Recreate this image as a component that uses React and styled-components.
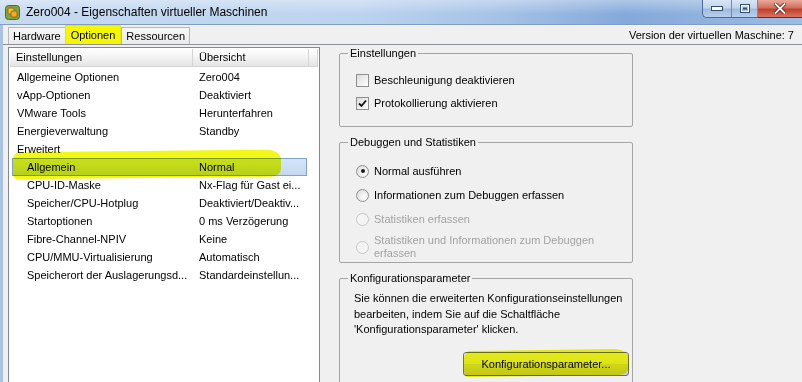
import React from 'react';
import styled, { createGlobalStyle } from 'styled-components';

const GlobalStyle = createGlobalStyle`
  body {
    margin: 0;
    background: #f0f0f0;
    font-family: "Liberation Sans", Tahoma, Arial, sans-serif;
    font-size: 11px;
    color: #000;
  }
`;

const Window = styled.div`
  width: 802px;
  height: 382px;
  overflow: hidden;
  display: flex;
  flex-direction: column;
  background: #f0f0f0;
`;

const TitleBar = styled.div`
  height: 24px;
  flex-shrink: 0;
  display: flex;
  align-items: flex-start;
  border-bottom: 1px solid #7f9dc4;
  background:
    linear-gradient(to bottom, rgba(255, 255, 255, 0.35), rgba(255, 255, 255, 0) 60%),
    linear-gradient(to right, #c6daf1 0%, #bcd3ef 45%, #a6c2e6 62%, #84a9da 78%, #9dbce3 100%);
`;

const AppIcon = styled.svg`
  margin: 5px 0 0 5px;
  flex-shrink: 0;
`;

const TitleText = styled.span`
  margin: 5px 0 0 6px;
  font-size: 12px;
  line-height: 15px;
  color: #000;
`;

const CaptionButtons = styled.div`
  margin-left: auto;
  display: flex;
`;

const CaptionGroup = styled.div`
  display: flex;
  border: 1px solid #4c6a93;
  border-top: none;
  border-right: none;
  border-radius: 0 0 0 5px;
  overflow: hidden;
  background: linear-gradient(to bottom, #d9e6f5 0%, #c0d4ec 45%, #9fbbe0 55%, #b7cfec 100%);
`;

const CaptionButton = styled.div`
  width: ${(p) => p.w}px;
  height: 17px;
  display: flex;
  align-items: center;
  justify-content: center;
  border-right: 1px solid #6d8bb3;
`;

const CloseButton = styled.div`
  width: 44px;
  height: 17px;
  display: flex;
  align-items: center;
  justify-content: center;
  border-bottom: 1px solid #6a2a22;
  background: linear-gradient(to bottom, #e9a99a 0%, #d46f5c 45%, #c0412c 55%, #d9735e 100%);
`;

const Body = styled.div`
  flex: 1;
  display: flex;
  flex-direction: column;
  border-left: 3px solid #a9c3e5;
  min-height: 0;
`;

const TabRow = styled.div`
  height: 19px;
  flex-shrink: 0;
  display: flex;
  align-items: flex-end;
  padding-left: 5px;
  border-bottom: 1px solid #8e9297;
`;

const Tab = styled.div`
  height: ${(p) => (p.active ? 18 : 16)}px;
  line-height: ${(p) => (p.active ? 18 : 16)}px;
  padding: 0 ${(p) => (p.active ? 5 : 4)}px;
  font-size: 11px;
  background: ${(p) => (p.active ? '#f4f700' : 'linear-gradient(to bottom, #f6f6f6, #ebebeb)')};
  border: 1px solid ${(p) => (p.active ? '#e8ea00' : '#b8b8b8')};
  border-bottom: none;
  margin-right: ${(p) => (p.active ? 0 : -1)}px;
`;

const VersionLabel = styled.div`
  margin-left: auto;
  align-self: center;
  padding-right: 8px;
  font-size: 11px;
`;

const Panel = styled.div`
  flex: 1;
  display: flex;
  gap: 19px;
  padding: 2px 0 0 5px;
  min-height: 0;
`;

const ListBox = styled.div`
  position: relative;
  width: 308px;
  padding: 1px;
  background: #fff;
  border: 1px solid #828790;
  border-bottom: none;
`;

const ListHeader = styled.div`
  display: grid;
  grid-template-columns: 183px 116px 1fr;
  height: 17px;
  background: linear-gradient(to bottom, #ffffff 0%, #f3f3f3 50%, #e4e4e4 100%);
  border-bottom: 1px solid #d5d5d5;
`;

const HeaderCell = styled.div`
  padding-left: 6px;
  line-height: 17px;
  border-right: 1px solid #d5d5d5;
`;

const Rows = styled.div`
  padding-top: 1px;
`;

const Row = styled.div`
  display: grid;
  grid-template-columns: 181px 114px;
  width: 295px;
  height: 18px;
  margin-left: 2px;
  box-sizing: border-box;
  align-items: center;
  background: ${(p) => (p.selected ? 'linear-gradient(to bottom, #d6e6f8, #c3d8f0)' : 'transparent')};
  border: 1px solid ${(p) => (p.selected ? '#7da2ce' : 'transparent')};
`;

const Cell = styled.div`
  padding-left: ${(p) => p.indent}px;
  white-space: nowrap;
  overflow: hidden;
`;

const Marker = styled.div`
  position: absolute;
  left: ${(p) => p.x}px;
  top: ${(p) => p.y}px;
  width: ${(p) => p.w}px;
  height: ${(p) => p.h}px;
  background: rgba(238, 246, 0, 0.9);
  mix-blend-mode: multiply;
  border-radius: 6px 14px 10px 4px / 8px 10px 8px 6px;
  transform: rotate(${(p) => p.r}deg);
  pointer-events: none;
`;

const RightColumn = styled.div`
  width: 294px;
  display: flex;
  flex-direction: column;
  gap: 9px;
`;

const Group = styled.fieldset`
  margin: 0;
  padding: 0 0 0 8px;
  border: 1px solid #a5a5a5;
  border-radius: 2px;
  min-width: 0;
`;

const Legend = styled.legend`
  padding: 0 2px;
  line-height: 13px;
  font-size: 11px;
`;

const OptionList = styled.div`
  display: flex;
  flex-direction: column;
  gap: ${(p) => p.gap}px;
  padding: ${(p) => p.pad};
`;

const Option = styled.label`
  display: flex;
  align-items: center;
  gap: 5px;
  min-height: ${(p) => p.h}px;
  color: ${(p) => (p.disabled ? '#a3a3a3' : '#000')};
  line-height: 13px;
`;

const CheckBox = styled.span`
  width: 11px;
  height: 11px;
  flex-shrink: 0;
  border: 1px solid #8f8f8f;
  background: linear-gradient(to bottom right, #dcdcdc, #ffffff);
  display: flex;
  align-items: center;
  justify-content: center;
`;

const Radio = styled.span`
  width: 11px;
  height: 11px;
  flex-shrink: 0;
  border-radius: 50%;
  border: 1px solid ${(p) => (p.disabled ? '#c8c8c8' : '#8f8f8f')};
  background: ${(p) => (p.disabled ? '#f4f4f4' : 'radial-gradient(circle at 65% 65%, #ffffff, #d6d6d6)')};
  display: flex;
  align-items: center;
  justify-content: center;

  &::after {
    content: '';
    display: ${(p) => (p.checked ? 'block' : 'none')};
    width: 4px;
    height: 4px;
    border-radius: 50%;
    background: #1a1a1a;
  }
`;

const InfoText = styled.p`
  margin: 0;
  padding: 6px 0 0 6px;
  line-height: 15.5px;
`;

const ButtonRow = styled.div`
  display: flex;
  justify-content: flex-end;
  padding: 14px 3px 8px 0;
`;

const ButtonWrap = styled.div`
  position: relative;
`;

const PushButton = styled.button`
  width: 166px;
  height: 24px;
  font-family: inherit;
  font-size: 11px;
  border: 1px solid #707070;
  border-radius: 3px;
  background: linear-gradient(to bottom, #f2f2f2 0%, #ebebeb 50%, #dddddd 51%, #cfcfcf 100%);
  color: #000;
  padding: 0;
`;

const rows = [
  { name: 'Allgemeine Optionen', value: 'Zero004', indent: 4 },
  { name: 'vApp-Optionen', value: 'Deaktiviert', indent: 4 },
  { name: 'VMware Tools', value: 'Herunterfahren', indent: 4 },
  { name: 'Energieverwaltung', value: 'Standby', indent: 4 },
  { name: 'Erweitert', value: '', indent: 4 },
  { name: 'Allgemein', value: 'Normal', indent: 14, selected: true },
  { name: 'CPU-ID-Maske', value: 'Nx-Flag für Gast ei...', indent: 14 },
  { name: 'Speicher/CPU-Hotplug', value: 'Deaktiviert/Deaktiv...', indent: 14 },
  { name: 'Startoptionen', value: '0 ms Verzögerung', indent: 14 },
  { name: 'Fibre-Channel-NPIV', value: 'Keine', indent: 14 },
  { name: 'CPU/MMU-Virtualisierung', value: 'Automatisch', indent: 14 },
  { name: 'Speicherort der Auslagerungsd...', value: 'Standardeinstellun...', indent: 14 },
];

function VmIcon() {
  return (
    <AppIcon width="15" height="15" viewBox="0 0 15 15">
      <rect x="0.5" y="0.5" width="14" height="14" rx="3" fill="#7fa33a" stroke="#4f6d1f" />
      <rect x="3" y="3" width="6" height="6" rx="1" fill="#f5c542" stroke="#9a6b12" />
      <rect x="6" y="6" width="6" height="6" rx="1" fill="#f0a830" stroke="#9a6b12" />
    </AppIcon>
  );
}

export default function App() {
  return (
    <>
      <GlobalStyle />
      <Window>
        <TitleBar>
          <VmIcon />
          <TitleText>Zero004 - Eigenschaften virtueller Maschinen</TitleText>
          <CaptionButtons>
            <CaptionGroup>
              <CaptionButton w={28}>
                <svg width="12" height="5" viewBox="0 0 12 5">
                  <rect x="0.5" y="0.5" width="11" height="4" fill="#fff" stroke="#34506f" />
                </svg>
              </CaptionButton>
              <CaptionButton w={25}>
                <svg width="10" height="9" viewBox="0 0 10 9">
                  <rect x="0.5" y="0.5" width="9" height="8" fill="none" stroke="#34506f" />
                  <rect x="1.5" y="1.5" width="7" height="6" fill="none" stroke="#fff" />
                  <rect x="3" y="3.5" width="4" height="2" fill="#34506f" />
                </svg>
              </CaptionButton>
            </CaptionGroup>
            <CloseButton>
              <svg width="12" height="11" viewBox="0 0 12 11">
                <path d="M1.5 1 L10.5 10 M10.5 1 L1.5 10" stroke="#5a1a12" strokeWidth="3.4" strokeLinecap="square" />
                <path d="M1.5 1 L10.5 10 M10.5 1 L1.5 10" stroke="#fff" strokeWidth="1.8" strokeLinecap="square" />
              </svg>
            </CloseButton>
          </CaptionButtons>
        </TitleBar>
        <Body>
          <TabRow>
            <Tab>Hardware</Tab>
            <Tab active>Optionen</Tab>
            <Tab>Ressourcen</Tab>
            <VersionLabel>Version der virtuellen Maschine: 7</VersionLabel>
          </TabRow>
          <Panel>
            <ListBox>
              <ListHeader>
                <HeaderCell>Einstellungen</HeaderCell>
                <HeaderCell>Übersicht</HeaderCell>
                <HeaderCell />
              </ListHeader>
              <Rows>
                {rows.map((r) => (
                  <Row key={r.name} selected={r.selected}>
                    <Cell indent={r.indent}>{r.name}</Cell>
                    <Cell indent={5}>{r.value}</Cell>
                  </Row>
                ))}
              </Rows>
              <Marker x={4} y={103} w={268} h={27} r={-0.6} />
            </ListBox>
            <RightColumn>
              <Group>
                <Legend>Einstellungen</Legend>
                <OptionList gap={3} pad="10px 0 13px 8px">
                  <Option h={20}>
                    <CheckBox />
                    Beschleunigung deaktivieren
                  </Option>
                  <Option h={20}>
                    <CheckBox>
                      <svg width="9" height="9" viewBox="0 0 9 9">
                        <path d="M1 4.5 L3.5 7 L8 1.5" fill="none" stroke="#111" strokeWidth="1.8" />
                      </svg>
                    </CheckBox>
                    Protokollierung aktivieren
                  </Option>
                </OptionList>
              </Group>
              <Group>
                <Legend>Debuggen und Statistiken</Legend>
                <OptionList gap={6} pad="13px 0 2px 8px">
                  <Option h={18}>
                    <Radio checked />
                    Normal ausführen
                  </Option>
                  <Option h={18}>
                    <Radio />
                    Informationen zum Debuggen erfassen
                  </Option>
                  <Option h={18} disabled>
                    <Radio disabled />
                    Statistiken erfassen
                  </Option>
                  <Option h={26} disabled>
                    <Radio disabled />
                    <span>
                      Statistiken und Informationen zum Debuggen
                      <br />
                      erfassen
                    </span>
                  </Option>
                </OptionList>
              </Group>
              <Group>
                <Legend>Konfigurationsparameter</Legend>
                <InfoText>
                  Sie können die erweiterten Konfigurationseinstellungen
                  <br />
                  bearbeiten, indem Sie auf die Schaltfläche
                  <br />
                  'Konfigurationsparameter' klicken.
                </InfoText>
                <ButtonRow>
                  <ButtonWrap>
                    <PushButton>Konfigurationsparameter...</PushButton>
                    <Marker x={1} y={-2} w={165} h={26} r={-0.8} />
                  </ButtonWrap>
                </ButtonRow>
              </Group>
            </RightColumn>
          </Panel>
        </Body>
      </Window>
    </>
  );
}
